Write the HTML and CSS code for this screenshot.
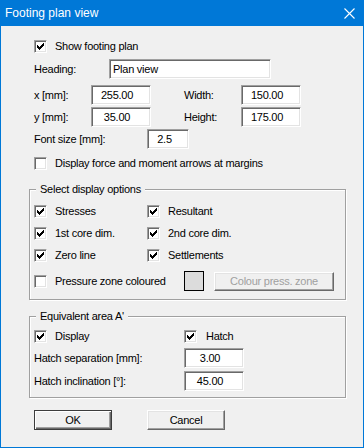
FILE: index.html
```html
<!DOCTYPE html>
<html lang="en">
<head>
  <meta charset="UTF-8">
  <title>Footing plan view</title>
  <link rel="stylesheet" href="styles.css">
</head>
<body>
  <div class="dialog">
    <div class="titlebar">
      <span class="title">Footing plan view</span>
      <svg class="close" width="11" height="11" viewBox="0 0 11 11">
        <path d="M0.5 0.5 L10.5 10.5 M10.5 0.5 L0.5 10.5" stroke="#fff" stroke-width="1.1" fill="none"/>
      </svg>
    </div>

    <div class="content">
      <div class="row">
        <span class="check on"></span>Show footing plan
      </div>

      <div class="row row-heading">
        <span class="label label-heading">Heading:</span>
        <span class="field field-text field-heading">Plan view</span>
      </div>

      <div class="row pair row-x">
        <span class="label">x [mm]:</span>
        <span class="field field-num">255.00</span>
        <span class="label">Width:</span>
        <span class="field field-num">150.00</span>
      </div>

      <div class="row pair row-tight">
        <span class="label">y [mm]:</span>
        <span class="field field-num">35.00</span>
        <span class="label">Height:</span>
        <span class="field field-num">175.00</span>
      </div>

      <div class="row row-tight">
        <span class="label label-font">Font size [mm]:</span>
        <span class="field field-font">2.5</span>
      </div>

      <div class="row row-arrows">
        <span class="check"></span>Display force and moment arrows at margins
      </div>

      <div class="group group-display">
        <div class="group-title">Select display options</div>
        <div class="checks">
          <div class="opt"><span class="check on"></span>Stresses</div>
          <div class="opt"><span class="check on"></span>Resultant</div>
          <div class="opt"><span class="check on"></span>1st core dim.</div>
          <div class="opt"><span class="check on"></span>2nd core dim.</div>
          <div class="opt"><span class="check on"></span>Zero line</div>
          <div class="opt"><span class="check on"></span>Settlements</div>
        </div>
        <div class="press">
          <div class="opt opt-wide"><span class="check"></span>Pressure zone coloured</div>
          <span class="swatch"></span>
          <span class="btn btn-disabled">Colour press. zone</span>
        </div>
      </div>

      <div class="group group-area">
        <div class="group-title">Equivalent area A'</div>
        <div class="area-checks">
          <div class="opt"><span class="check on"></span>Display</div>
          <div class="opt opt-hatch"><span class="check on"></span>Hatch</div>
        </div>
        <div class="hatch-row hatch-sep">
          <span class="label">Hatch separation [mm]:</span>
          <span class="field field-num">3.00</span>
        </div>
        <div class="hatch-row hatch-incl">
          <span class="label">Hatch inclination [°]:</span>
          <span class="field field-num">45.00</span>
        </div>
      </div>

      <div class="buttons">
        <span class="btn btn-default">OK</span>
        <span class="btn">Cancel</span>
      </div>
    </div>
  </div>

  <script>
    // draw the classic 7x7 tick into every ticked box
    const tick = '<svg width="11" height="11" viewBox="0 0 11 11" shape-rendering="crispEdges">' +
      '<path d="M2 4h1v3h-1z M3 5h1v3h-1z M4 6h1v3h-1z M5 5h1v3h-1z M6 4h1v3h-1z M7 3h1v3h-1z M8 2h1v3h-1z" fill="#000"/></svg>';
    document.querySelectorAll('.check.on').forEach(box => {
      box.innerHTML = tick;
    });
  </script>
</body>
</html>
```

FILE: styles.css
```css
* {
  box-sizing: border-box;
}
body {
  margin: 0;
  background-color: #f0f0f0;
  font-family: "Liberation Sans", Arial, sans-serif;
  font-size: 11px;
  letter-spacing: -0.25px;
  color: #000;
}
.dialog {
  width: 364px;
  height: 448px;
  border: 1px solid #0078d7;
  border-top: 0;
  background-color: #f0f0f0;
}
.titlebar {
  height: 26px;
  background-color: #0078d7;
  color: white;
  display: flex;
  align-items: center;
  justify-content: space-between;
  padding: 0 8px 0 4px;
}
.title {
  font-size: 12px;
  letter-spacing: 0;
}
.close {
  display: block;
}
.content {
  padding: 10px 17px 0 28px;
}
.row {
  display: flex;
  align-items: center;
  height: 20px;
  padding-left: 5px;
}
.row-heading {
  margin-top: 3px;
}
.row-x {
  margin-top: 6px;
}
.row-tight {
  margin-top: 2px;
}
.row-arrows {
  margin-top: 4px;
}
.pair {
  display: grid;
  grid-template-columns: 57px 93px 57px 60px;
  align-items: center;
}
.label-heading {
  width: 75px;
}
.label-font {
  width: 113px;
}
.check {
  flex: none;
  width: 13px;
  height: 13px;
  margin-right: 8px;
  background-color: #fff;
  border: 1px solid;
  border-color: #a0a0a0 #fff #fff #a0a0a0;
  box-shadow: inset 1px 1px #696969, inset -1px -1px #e3e3e3;
}
.check svg {
  display: block;
}
.field {
  height: 20px;
  background-color: #fff;
  border: 1px solid;
  border-color: #a0a0a0 #fff #fff #a0a0a0;
  box-shadow: inset 1px 1px #696969, inset -1px -1px #e3e3e3;
  display: flex;
  align-items: center;
  justify-content: center;
  padding-right: 8px;
}
.field-text {
  justify-content: flex-start;
  padding: 0 0 0 3px;
}
.field-heading {
  width: 162px;
}
.field-num {
  width: 60px;
}
.field-font {
  width: 42px;
  padding-right: 7px;
}
.group {
  border: 1px solid #a0a0a0;
  box-shadow: inset 1px 1px #fff, 1px 1px #fff;
  padding: 0 0 8px 4px;
}
.group-display {
  margin-top: 16px;
}
.group-area {
  margin-top: 16px;
  padding-bottom: 6px;
}
.group-title {
  width: max-content;
  height: 14px;
  line-height: 14px;
  margin: -8px 0 0 2px;
  padding: 0 4px;
  background-color: #f0f0f0;
}
.checks {
  display: grid;
  grid-template-columns: 113px auto;
  grid-auto-rows: 22px;
  margin-top: 4px;
}
.opt {
  display: flex;
  align-items: center;
}
.opt-hatch .check {
  margin-right: 9px;
}
.press {
  display: flex;
  align-items: center;
  height: 20px;
  margin-top: 5px;
}
.opt-wide {
  width: 150px;
}
.swatch {
  width: 20px;
  height: 20px;
  border: 1px solid #000;
  background-color: #dcdcdc;
  margin-right: 10px;
}
.area-checks {
  display: grid;
  grid-template-columns: 150px auto;
  height: 20px;
  margin-top: 3px;
}
.hatch-row {
  display: grid;
  grid-template-columns: 150px 60px;
  align-items: center;
  height: 20px;
}
.hatch-sep {
  margin-top: 2px;
}
.hatch-incl {
  margin-top: 3px;
}
.buttons {
  display: flex;
  gap: 35px;
  margin-top: 12px;
  padding-left: 5px;
}
.btn {
  width: 78px;
  height: 20px;
  display: flex;
  align-items: center;
  justify-content: center;
  border: 1px solid;
  border-color: #fff #696969 #696969 #fff;
  box-shadow: inset -1px -1px #a0a0a0, inset 1px 1px #e3e3e3;
}
.btn-default {
  border-color: #3c3c3c;
  box-shadow: inset 1px 1px #fff, inset -1px -1px #696969, inset -2px -2px #a0a0a0;
}
.btn-disabled {
  width: 120px;
  height: 19px;
  color: #a0a0a0;
}
```
